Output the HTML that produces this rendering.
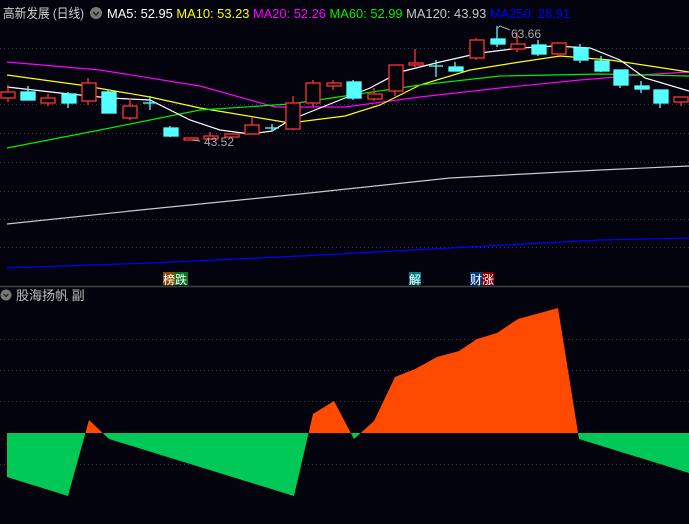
<!DOCTYPE html>
<html><head><meta charset="utf-8"><style>
html,body{margin:0;padding:0;background:#03030d;width:689px;height:524px;overflow:hidden}
svg{display:block}
text{font-family:"Liberation Sans","Noto Sans CJK SC",sans-serif}
</style></head><body>
<svg width="689" height="524" viewBox="0 0 689 524" xmlns="http://www.w3.org/2000/svg">
<rect width="689" height="524" fill="#03030d"/>
<g stroke="#3a3a46" stroke-dasharray="1,3" stroke-width="1">
<line x1="0" y1="48.5" x2="689" y2="48.5"/>
<line x1="0" y1="104.5" x2="689" y2="104.5"/>
<line x1="0" y1="133.5" x2="689" y2="133.5"/>
<line x1="0" y1="162.5" x2="689" y2="162.5"/>
<line x1="0" y1="191.5" x2="689" y2="191.5"/>
<line x1="0" y1="219.5" x2="689" y2="219.5"/>
<line x1="0" y1="247.5" x2="689" y2="247.5"/>
<line x1="0" y1="339.5" x2="689" y2="339.5"/>
<line x1="0" y1="370.5" x2="689" y2="370.5"/>
<line x1="0" y1="401.5" x2="689" y2="401.5"/>
<line x1="0" y1="464.5" x2="689" y2="464.5"/>
</g>
<line x1="0" y1="286.5" x2="689" y2="286.5" stroke="#444" stroke-width="1.5"/>
<text x="3" y="18" font-size="13" fill="#d0d0d0" textLength="81" lengthAdjust="spacingAndGlyphs">高新发展 (日线)</text>
<circle cx="96" cy="13" r="6" fill="#777"/><path d="M93 12l3 3 3-3" stroke="#222" stroke-width="1.5" fill="none"/>
<text x="107" y="18" font-size="13" textLength="463" lengthAdjust="spacingAndGlyphs"><tspan fill="#fff">MA5: 52.95 </tspan><tspan fill="#ffff00">MA10: 53.23 </tspan><tspan fill="#ff00ff">MA20: 52.26 </tspan><tspan fill="#00ee00">MA60: 52.99 </tspan><tspan fill="#c8c8c8">MA120: 43.93 </tspan><tspan fill="#0000ff">MA250: 28.91</tspan></text>
<g fill="none" stroke-width="1.2">
<polyline stroke="#ff00ff" points="7,62 100,70 200,86 275,107 345,107 420,97 500,88 580,80 640,75 689,72"/>
<polyline stroke="#ffff00" points="7,75 80,85 150,97 200,108 260,118 290,123 345,116 380,105 420,85 470,70 520,62 560,56 610,60 650,66 689,72"/>
<polyline stroke="#00ee00" points="7,148 100,130 200,110 290,104 345,96 420,85 500,76 600,74 689,76"/>
<polyline stroke="#ffffff" points="7,87 60,93 110,98 150,100 190,120 220,130 250,134 272,131 290,120 320,108 345,98 370,88 400,72 440,62 480,53 520,48 555,46 590,48 620,60 645,78 689,91"/>
<polyline stroke="#c8c8c8" points="7,224 150,209 300,194 450,178 600,170 689,166"/>
<polyline stroke="#0000ff" points="7,268 150,263 300,256 450,248 600,240 689,238"/>
</g>
<g stroke-width="1.3">
<g stroke="#ff3333" fill="#03030d">
<line x1="8" y1="85" x2="8" y2="102"/><rect x="1" y="92" width="14" height="6"/>
<line x1="48" y1="94" x2="48" y2="106"/><rect x="41" y="98" width="14" height="5"/>
<line x1="88" y1="78" x2="88" y2="105"/><rect x="82" y="83" width="14" height="18"/>
<line x1="130" y1="98" x2="130" y2="120"/><rect x="123" y="106" width="14" height="12"/>
<rect x="184" y="138" width="14" height="2"/>
<line x1="210" y1="132" x2="210" y2="140"/><rect x="204" y="136" width="14" height="3"/>
<rect x="225" y="134" width="14" height="3"/>
<line x1="252" y1="117" x2="252" y2="135"/><rect x="245" y="125" width="14" height="9"/>
<line x1="293" y1="96" x2="293" y2="130"/><rect x="286" y="103" width="14" height="26"/>
<line x1="313" y1="80" x2="313" y2="107"/><rect x="306" y="83" width="14" height="20"/>
<line x1="333" y1="80" x2="333" y2="90"/><rect x="327" y="83" width="14" height="3"/>
<line x1="374" y1="88" x2="374" y2="101"/><rect x="368" y="94" width="14" height="5"/>
<line x1="395" y1="65" x2="395" y2="96"/><rect x="389" y="65" width="14" height="26"/>
<line x1="415" y1="49" x2="415" y2="67"/><rect x="409" y="63" width="14" height="2"/>
<line x1="476" y1="38" x2="476" y2="60"/><rect x="470" y="40" width="14" height="18"/>
<line x1="517" y1="32" x2="517" y2="52"/><rect x="511" y="44" width="14" height="5"/>
<line x1="558" y1="42" x2="558" y2="56"/><rect x="552" y="43" width="14" height="11"/>
<line x1="681" y1="97" x2="681" y2="106"/><rect x="674" y="97" width="14" height="5"/>
</g>
<g stroke="#55ffff" fill="#55ffff">
<line x1="28" y1="86" x2="28" y2="100"/><rect x="21" y="92" width="14" height="8"/>
<line x1="68" y1="92" x2="68" y2="108"/><rect x="62" y="94" width="14" height="9"/>
<line x1="108" y1="90" x2="108" y2="113"/><rect x="102" y="92" width="14" height="21"/>
<line x1="150" y1="96" x2="150" y2="110"/><line x1="143" y1="103" x2="157" y2="103"/>
<line x1="170" y1="126" x2="170" y2="137"/><rect x="164" y="128" width="14" height="8"/>
<line x1="272" y1="124" x2="272" y2="131"/><line x1="265" y1="128" x2="279" y2="128"/>
<line x1="353" y1="80" x2="353" y2="100"/><rect x="347" y="82" width="14" height="16"/>
<line x1="436" y1="60" x2="436" y2="77"/><line x1="429" y1="66" x2="443" y2="66"/>
<line x1="455" y1="62" x2="455" y2="71"/><rect x="449" y="67" width="14" height="4"/>
<line x1="497" y1="26" x2="497" y2="47"/><rect x="491" y="39" width="14" height="5"/>
<line x1="538" y1="40" x2="538" y2="56"/><rect x="532" y="45" width="14" height="9"/>
<line x1="580" y1="44" x2="580" y2="63"/><rect x="574" y="48" width="14" height="12"/>
<line x1="601" y1="56" x2="601" y2="72"/><rect x="595" y="61" width="14" height="10"/>
<line x1="620" y1="70" x2="620" y2="88"/><rect x="614" y="70" width="14" height="15"/>
<line x1="641" y1="81" x2="641" y2="93"/><rect x="635" y="86" width="14" height="3"/>
<line x1="660" y1="90" x2="660" y2="108"/><rect x="654" y="90" width="14" height="13"/>
</g>
</g>
<path d="M200 141l-8-1" stroke="#aaa" fill="none"/>
<text x="204" y="146" font-size="12" fill="#aaaaaa">43.52</text>
<path d="M498 28l2-2 10 4" stroke="#aaa" fill="none"/>
<text x="511" y="38" font-size="12" fill="#aaaaaa">63.66</text>
<g font-size="12">
<rect x="163" y="272" width="12" height="13" fill="#8a4a00"/><text x="163" y="284" fill="#fff">榜</text>
<rect x="175" y="272" width="13" height="13" fill="#007a1e"/><text x="175" y="284" fill="#fff">跌</text>
<rect x="409" y="272" width="12" height="13" fill="#007f80"/><text x="409" y="284" fill="#fff">解</text>
<rect x="470" y="272" width="12" height="13" fill="#003a80"/><text x="470" y="284" fill="#fff">财</text>
<rect x="482" y="272" width="12" height="13" fill="#8a0000"/><text x="482" y="284" fill="#fff">涨</text>
</g>
<circle cx="6" cy="295" r="5.5" fill="#777"/><path d="M3.5 294l2.5 2.5 2.5-2.5" stroke="#222" stroke-width="1.3" fill="none"/>
<text x="16" y="300" font-size="13" fill="#c0c0c0">股海扬帆 副</text>
<defs>
<clipPath id="up"><rect x="0" y="0" width="689" height="433"/></clipPath>
<clipPath id="dn"><rect x="0" y="433" width="689" height="91"/></clipPath>
</defs>
<polygon clip-path="url(#up)" fill="#ff4a00" points="7,433 7,477 68,496 89,420 109,439 294,496 313,414 334,401 354,439 374,421 395,377 415,369 437,357 459,351 477,339 497,333 518,319 558,308 579,439 689,473 689,433"/>
<polygon clip-path="url(#dn)" fill="#00c957" points="7,433 7,477 68,496 89,420 109,439 294,496 313,414 334,401 354,439 374,421 395,377 415,369 437,357 459,351 477,339 497,333 518,319 558,308 579,439 689,473 689,433"/>
</svg>
</body></html>
